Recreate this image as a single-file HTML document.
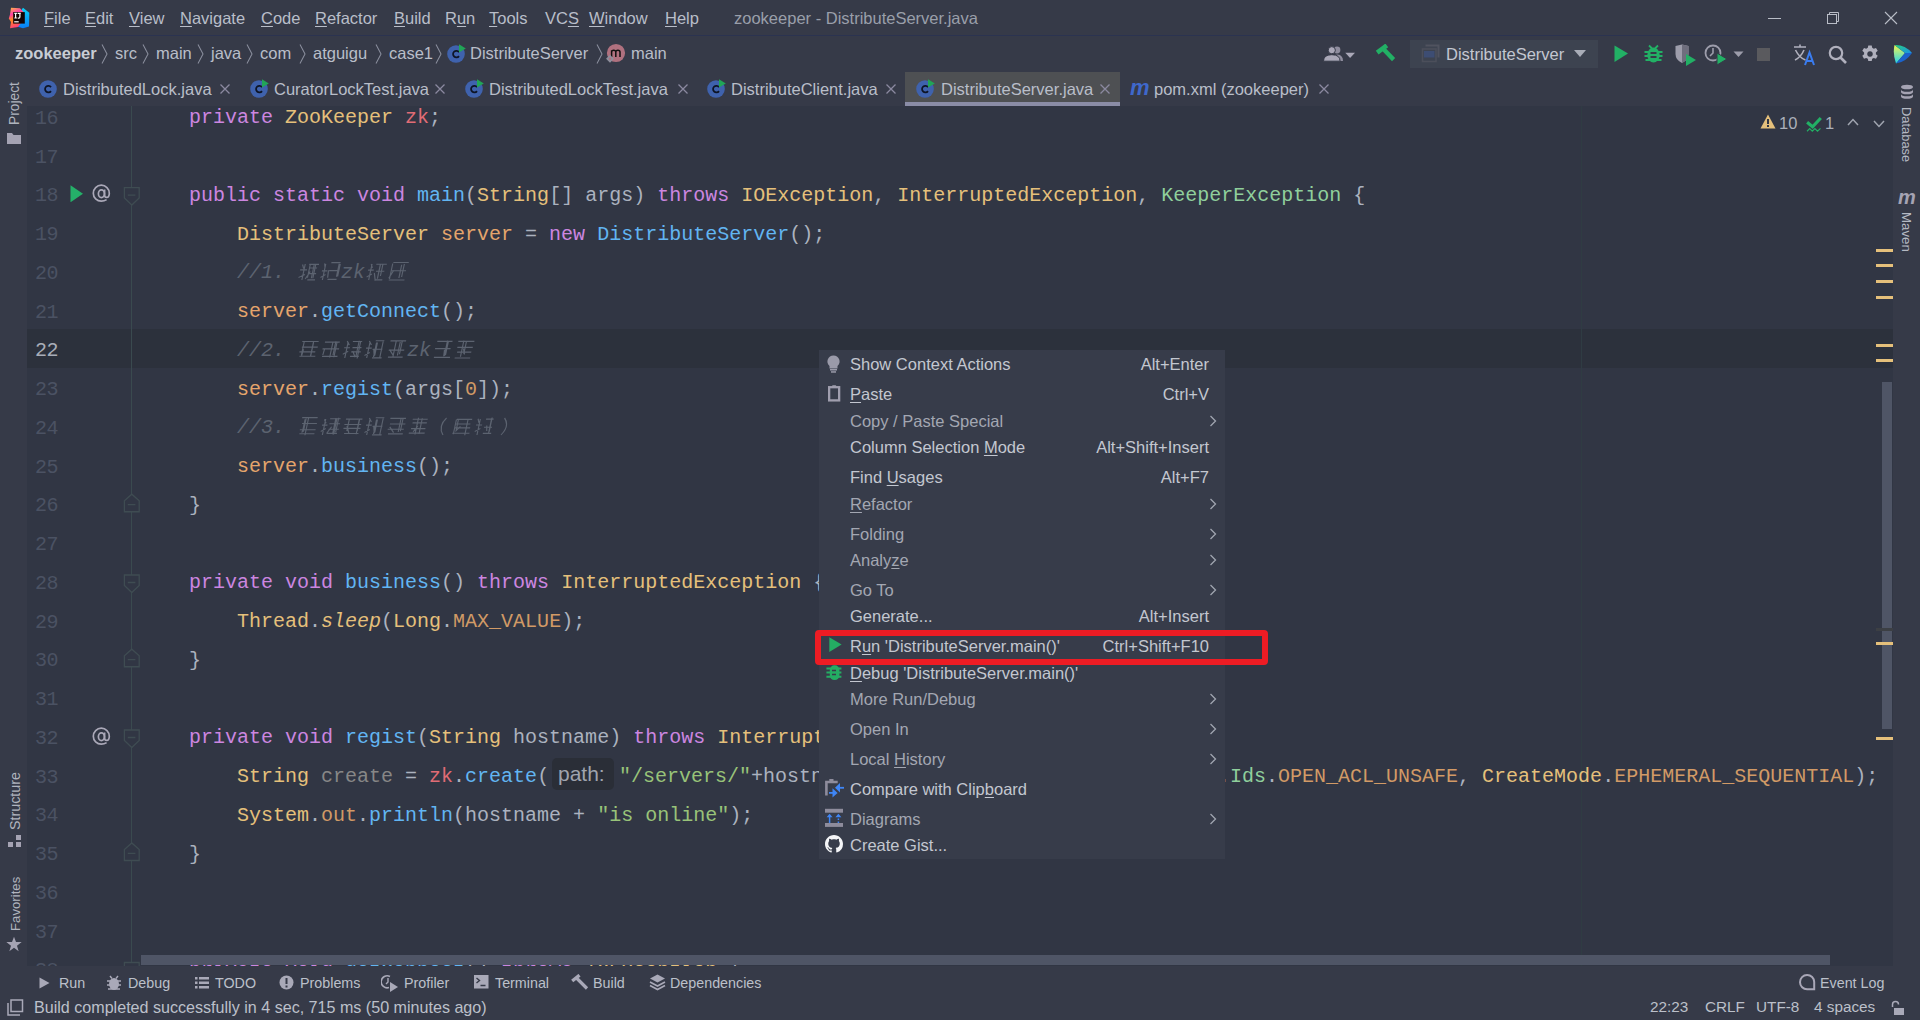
<!DOCTYPE html><html><head><meta charset="utf-8"><style>
*{margin:0;padding:0;box-sizing:border-box}
html,body{width:1920px;height:1020px;overflow:hidden;background:#363a48;font-family:"Liberation Sans",sans-serif;color:#b9bec9}
.a{position:absolute;white-space:pre}
.ui{font-size:16.5px;line-height:20px}
u{text-decoration:underline;text-decoration-thickness:1px;text-underline-offset:2px}
.x{color:#868a99}
#editor{left:27px;top:106px;width:1866px;height:860px;background:#313644;overflow:hidden}
.ln{position:absolute;left:0;width:31px;font-family:"Liberation Mono",monospace;font-size:20px;letter-spacing:-0.5px;color:#4b5263;text-align:right}
.code{position:absolute;font-family:"Liberation Mono",monospace;font-size:20px;line-height:38.75px;white-space:pre;color:#abb2bf}
.k{color:#cc86e0}.t{color:#e5c07b}.f{color:#62b5f2}.fd{color:#e06c75}.v{color:#e5a56c}.c{color:#5c6370;font-style:italic}
.s{color:#98c379}.n{color:#d19a66}.g{color:#878787}.kx{color:#8fcf9c}.st{color:#e5c07b;font-style:italic}
#menu{left:819px;top:350px;width:406px;height:509px;background:#373c4a}
.mi{position:absolute;left:31px;font-size:16.5px;line-height:20px;white-space:pre;color:#c3c7d0}
.mi.d{color:#a3a7b2}
.sc{position:absolute;right:16px;font-size:16.5px;line-height:20px;color:#c3c7d0;white-space:pre}
</style></head><body>
<svg class="a" style="left:8px;top:7px" width="22" height="22" viewBox="0 0 22 22">
<defs><linearGradient id="lgb" x1="0" y1="0" x2="0" y2="1"><stop offset="0" stop-color="#08d0f5"/><stop offset="1" stop-color="#0a7cf5"/></linearGradient>
<linearGradient id="lgp" x1="0" y1="0" x2="0.3" y2="1"><stop offset="0" stop-color="#ffc23a"/><stop offset="0.35" stop-color="#ff3fa8"/><stop offset="0.6" stop-color="#ff8a1c"/><stop offset="1" stop-color="#ff3e7a"/></linearGradient></defs>
<polygon points="15,0.8 21.3,5.8 21,19.5 15,21.3 9,19.5 12,5" fill="url(#lgb)"/>
<polygon points="3,0.8 12,1.2 15.5,5 13,16 10,20 2,21.3 3,15 0.8,11.5 2,7.5" fill="url(#lgp)"/>
<rect x="5.2" y="5.1" width="11.6" height="11.5" fill="#120404"/>
<path d="M6.3,6.3 h2.6 M7.6,6.3 v4.7 M6.3,11 h2.6 M9.6,6.3 h3.2 M11.9,6.3 v3.8 q0,1 -1,1 h-1.2" fill="none" stroke="#fff" stroke-width="1.2"/>
<rect x="6.2" y="14.2" width="4.5" height="1.2" fill="#fff"/>
</svg>
<div class="a ui" style="left:44px;top:8px"><u>F</u>ile</div>
<div class="a ui" style="left:85px;top:8px"><u>E</u>dit</div>
<div class="a ui" style="left:129px;top:8px"><u>V</u>iew</div>
<div class="a ui" style="left:180px;top:8px"><u>N</u>avigate</div>
<div class="a ui" style="left:261px;top:8px"><u>C</u>ode</div>
<div class="a ui" style="left:315px;top:8px"><u>R</u>efactor</div>
<div class="a ui" style="left:394px;top:8px"><u>B</u>uild</div>
<div class="a ui" style="left:445px;top:8px">R<u>u</u>n</div>
<div class="a ui" style="left:489px;top:8px"><u>T</u>ools</div>
<div class="a ui" style="left:545px;top:8px">VC<u>S</u></div>
<div class="a ui" style="left:589px;top:8px"><u>W</u>indow</div>
<div class="a ui" style="left:665px;top:8px"><u>H</u>elp</div>
<div class="a ui" style="left:734px;top:8px;color:#9a9faa">zookeeper - DistributeServer.java</div>
<div class="a" style="left:0;top:35px;width:1920px;height:1px;background:#2b3350"></div>
<div class="a ui" style="left:15px;top:43px;font-weight:bold;color:#c8ccd4">zookeeper</div>
<svg class="a" style="left:101px;top:44px" width="8" height="20"><path d="M1,0.5 L6,10.0 L1,19.5" fill="none" stroke="#8a8e9d" stroke-width="1.05"/></svg>
<div class="a ui" style="left:115px;top:43px">src</div>
<svg class="a" style="left:142px;top:44px" width="8" height="20"><path d="M1,0.5 L6,10.0 L1,19.5" fill="none" stroke="#8a8e9d" stroke-width="1.05"/></svg>
<div class="a ui" style="left:156px;top:43px">main</div>
<svg class="a" style="left:197px;top:44px" width="8" height="20"><path d="M1,0.5 L6,10.0 L1,19.5" fill="none" stroke="#8a8e9d" stroke-width="1.05"/></svg>
<div class="a ui" style="left:211px;top:43px">java</div>
<svg class="a" style="left:246px;top:44px" width="8" height="20"><path d="M1,0.5 L6,10.0 L1,19.5" fill="none" stroke="#8a8e9d" stroke-width="1.05"/></svg>
<div class="a ui" style="left:260px;top:43px">com</div>
<svg class="a" style="left:299px;top:44px" width="8" height="20"><path d="M1,0.5 L6,10.0 L1,19.5" fill="none" stroke="#8a8e9d" stroke-width="1.05"/></svg>
<div class="a ui" style="left:313px;top:43px">atguigu</div>
<svg class="a" style="left:375px;top:44px" width="8" height="20"><path d="M1,0.5 L6,10.0 L1,19.5" fill="none" stroke="#8a8e9d" stroke-width="1.05"/></svg>
<div class="a ui" style="left:389px;top:43px">case1</div>
<svg class="a" style="left:435px;top:44px" width="8" height="20"><path d="M1,0.5 L6,10.0 L1,19.5" fill="none" stroke="#8a8e9d" stroke-width="1.05"/></svg>
<svg class="a" style="left:447px;top:44px" width="22" height="20" viewBox="0 0 22 20"><circle cx="9" cy="10" r="8.8" fill="#3f62ad"/><path d="M12,8.1 A3.3,3.3 0 1 0 12,12.1" fill="none" stroke="#0e1526" stroke-width="1.8"/><polygon points="12,0.2 18.8,4.6 12,8.6" fill="#21a557"/></svg>
<div class="a ui" style="left:470px;top:43px">DistributeServer</div>
<svg class="a" style="left:596px;top:44px" width="8" height="20"><path d="M1,0.5 L6,10.0 L1,19.5" fill="none" stroke="#8a8e9d" stroke-width="1.05"/></svg>
<svg class="a" style="left:604px;top:43px" width="24" height="22" viewBox="0 0 24 22"><circle cx="12" cy="10" r="9.1" fill="#b0717f"/><path d="M7.6,14 V7.2 M7.6,9 q0,-1.8 2.1,-1.8 q2.1,0 2.1,1.8 V14 M11.8,9 q0,-1.8 2.1,-1.8 q2.1,0 2.1,1.8 V14" fill="none" stroke="#111" stroke-width="1.5"/><rect x="3.2" y="13" width="5.6" height="5.6" transform="rotate(45 6 15.8)" fill="#8f8f9c"/><rect x="4.9" y="14.7" width="2.2" height="2.2" transform="rotate(45 6 15.8)" fill="#b0717f"/></svg>
<div class="a ui" style="left:631px;top:43px">main</div>
<div class="a" style="left:905px;top:72px;width:215px;height:34px;background:#4e5053"></div>
<div class="a" style="left:905px;top:102px;width:215px;height:4px;background:#8a8ca6"></div>
<svg class="a" style="left:39px;top:79px" width="22" height="20" viewBox="0 0 22 20"><circle cx="9" cy="10" r="8.8" fill="#3f62ad"/><path d="M12,8.1 A3.3,3.3 0 1 0 12,12.1" fill="none" stroke="#0e1526" stroke-width="1.8"/></svg>
<div class="a ui" style="left:63px;top:79px">DistributedLock.java</div>
<svg class="a" style="left:219px;top:83px" width="12" height="12"><path d="M1.5,1.5 L10.5,10.5 M10.5,1.5 L1.5,10.5" stroke="#8b89a0" stroke-width="1.3"/></svg>
<svg class="a" style="left:250px;top:79px" width="22" height="20" viewBox="0 0 22 20"><circle cx="9" cy="10" r="8.8" fill="#3f62ad"/><path d="M12,8.1 A3.3,3.3 0 1 0 12,12.1" fill="none" stroke="#0e1526" stroke-width="1.8"/><polygon points="12,0.2 18.8,4.6 12,8.6" fill="#21a557"/></svg>
<div class="a ui" style="left:274px;top:79px">CuratorLockTest.java</div>
<svg class="a" style="left:434px;top:83px" width="12" height="12"><path d="M1.5,1.5 L10.5,10.5 M10.5,1.5 L1.5,10.5" stroke="#8b89a0" stroke-width="1.3"/></svg>
<svg class="a" style="left:465px;top:79px" width="22" height="20" viewBox="0 0 22 20"><circle cx="9" cy="10" r="8.8" fill="#3f62ad"/><path d="M12,8.1 A3.3,3.3 0 1 0 12,12.1" fill="none" stroke="#0e1526" stroke-width="1.8"/><polygon points="12,0.2 18.8,4.6 12,8.6" fill="#21a557"/></svg>
<div class="a ui" style="left:489px;top:79px">DistributedLockTest.java</div>
<svg class="a" style="left:677px;top:83px" width="12" height="12"><path d="M1.5,1.5 L10.5,10.5 M10.5,1.5 L1.5,10.5" stroke="#8b89a0" stroke-width="1.3"/></svg>
<svg class="a" style="left:707px;top:79px" width="22" height="20" viewBox="0 0 22 20"><circle cx="9" cy="10" r="8.8" fill="#3f62ad"/><path d="M12,8.1 A3.3,3.3 0 1 0 12,12.1" fill="none" stroke="#0e1526" stroke-width="1.8"/><polygon points="12,0.2 18.8,4.6 12,8.6" fill="#21a557"/></svg>
<div class="a ui" style="left:731px;top:79px">DistributeClient.java</div>
<svg class="a" style="left:885px;top:83px" width="12" height="12"><path d="M1.5,1.5 L10.5,10.5 M10.5,1.5 L1.5,10.5" stroke="#8b89a0" stroke-width="1.3"/></svg>
<svg class="a" style="left:916px;top:79px" width="22" height="20" viewBox="0 0 22 20"><circle cx="9" cy="10" r="8.8" fill="#3f62ad"/><path d="M12,8.1 A3.3,3.3 0 1 0 12,12.1" fill="none" stroke="#0e1526" stroke-width="1.8"/><polygon points="12,0.2 18.8,4.6 12,8.6" fill="#21a557"/></svg>
<div class="a ui" style="left:941px;top:79px">DistributeServer.java</div>
<svg class="a" style="left:1099px;top:83px" width="12" height="12"><path d="M1.5,1.5 L10.5,10.5 M10.5,1.5 L1.5,10.5" stroke="#8b89a0" stroke-width="1.3"/></svg>
<div class="a" style="left:1130px;top:77px;font:italic bold 22px/22px 'Liberation Sans';color:#3f68cc;letter-spacing:-1px">m</div>
<div class="a ui" style="left:1154px;top:79px">pom.xml (zookeeper)</div>
<svg class="a" style="left:1318px;top:83px" width="12" height="12"><path d="M1.5,1.5 L10.5,10.5 M10.5,1.5 L1.5,10.5" stroke="#8b89a0" stroke-width="1.3"/></svg>
<div class="a" id="editor"><div class="a" style="left:0;top:222.75px;width:1866px;height:38.75px;background:#2c313c"></div>
<div class="a" style="left:104px;top:0;width:1px;height:860px;background:#3a4a4f"></div>
<div class="a" style="left:1554px;top:0;width:1px;height:860px;background:#2f3c43"></div>
<div class="ln" style="top:-6.25px;line-height:38.75px;color:#4b5263">16</div>
<div class="ln" style="top:32.50px;line-height:38.75px;color:#4b5263">17</div>
<div class="ln" style="top:71.25px;line-height:38.75px;color:#4b5263">18</div>
<div class="ln" style="top:110.00px;line-height:38.75px;color:#4b5263">19</div>
<div class="ln" style="top:148.75px;line-height:38.75px;color:#4b5263">20</div>
<div class="ln" style="top:187.50px;line-height:38.75px;color:#4b5263">21</div>
<div class="ln" style="top:226.25px;line-height:38.75px;color:#a8adb8">22</div>
<div class="ln" style="top:265.00px;line-height:38.75px;color:#4b5263">23</div>
<div class="ln" style="top:303.75px;line-height:38.75px;color:#4b5263">24</div>
<div class="ln" style="top:342.50px;line-height:38.75px;color:#4b5263">25</div>
<div class="ln" style="top:381.25px;line-height:38.75px;color:#4b5263">26</div>
<div class="ln" style="top:420.00px;line-height:38.75px;color:#4b5263">27</div>
<div class="ln" style="top:458.75px;line-height:38.75px;color:#4b5263">28</div>
<div class="ln" style="top:497.50px;line-height:38.75px;color:#4b5263">29</div>
<div class="ln" style="top:536.25px;line-height:38.75px;color:#4b5263">30</div>
<div class="ln" style="top:575.00px;line-height:38.75px;color:#4b5263">31</div>
<div class="ln" style="top:613.75px;line-height:38.75px;color:#4b5263">32</div>
<div class="ln" style="top:652.50px;line-height:38.75px;color:#4b5263">33</div>
<div class="ln" style="top:691.25px;line-height:38.75px;color:#4b5263">34</div>
<div class="ln" style="top:730.00px;line-height:38.75px;color:#4b5263">35</div>
<div class="ln" style="top:768.75px;line-height:38.75px;color:#4b5263">36</div>
<div class="ln" style="top:807.50px;line-height:38.75px;color:#4b5263">37</div>
<div class="ln" style="top:846.25px;line-height:38.75px;color:#4b5263">38</div>
<div class="code" style="left:114px;top:-6.75px">    <span class="k">private</span> <span class="t">ZooKeeper</span> <span class="fd">zk</span>;</div>
<div class="code" style="left:114px;top:70.75px">    <span class="k">public static void</span> <span class="f">main</span>(<span class="t">String</span>[] args) <span class="k">throws</span> <span class="t">IOException</span>, <span class="t">InterruptedException</span>, <span class="kx">KeeperException</span> {</div>
<div class="code" style="left:114px;top:109.50px">        <span class="t">DistributeServer</span> <span class="v">server</span> = <span class="k">new</span> <span class="f">DistributeServer</span>();</div>
<div class="code" style="left:114px;top:148.25px">        <span class="c">//1. <svg style="display:inline-block;vertical-align:-3px" width="22" height="20"><path d="M3.3,3.4l1.9,4M2,8.9h6.9M5.9,3V19M2,16.5l5.9,-3M9.9,3.3H19.8M10.5,7.0H18.6M11.6,12.6H18.8M11.3,18.8H19.0M16.5,3.5V17.2M11.0,3.9V16.8M15.0,3.0V17.2M12.5,10.6l-3.5,7.5" transform="skewX(-12) translate(3,0)" fill="none" stroke="#5c6370" stroke-width="1.15"/></svg><svg style="display:inline-block;vertical-align:-3px" width="22" height="20"><path d="M3.2,2.4l1.2,4M2,9.9h5.4M4.4,3V19M2,16.5l4.4,-3M9.7,1.6H18.9M9.2,9.6H18.5M9.4,18.4H18.5M18.9,3.0V15.6M17.8,2.8V15.8M8.5,9.3l0.7,7.5" transform="skewX(-12) translate(3,0)" fill="none" stroke="#5c6370" stroke-width="1.15"/></svg>zk<svg style="display:inline-block;vertical-align:-3px" width="22" height="20"><path d="M3.9,3.0l1.9,4M2,9.1h5.7M4.7,3V19M2,16.0l4.7,-3M9.0,3.2H19.5M10.2,10.2H18.5M10.7,18.8H18.3M15.6,2.7V15.0M13.1,3.1V17.7M13.2,3.5V17.6M8.9,12.0l2.5,7.7" transform="skewX(-12) translate(3,0)" fill="none" stroke="#5c6370" stroke-width="1.15"/></svg><svg style="display:inline-block;vertical-align:-3px" width="22" height="20"><path d="M3.7,1.5H19.1M3.9,9.7H18.1M2.8,19.0H18.5M15.0,3.0V16.0M12.5,3.7V17.0M3.3,2.5V18.0M5.8,9.3l-3.4,7.9" transform="skewX(-12) translate(3,0)" fill="none" stroke="#5c6370" stroke-width="1.15"/></svg></span></div>
<div class="code" style="left:114px;top:187.00px">        <span class="v">server</span>.<span class="f">getConnect</span>();</div>
<div class="code" style="left:114px;top:225.75px">        <span class="c">//2. <svg style="display:inline-block;vertical-align:-3px" width="22" height="20"><path d="M2.8,2.5H19.2M3.6,8.1H19.5M2.1,12.8H18.0M3.1,17.2H19.0M14.1,2.2V16.9M4.8,2.2V15.9M14.3,3.4V16.8M5.7,10.1l-0.5,6.6" transform="skewX(-12) translate(3,0)" fill="none" stroke="#5c6370" stroke-width="1.15"/></svg><svg style="display:inline-block;vertical-align:-3px" width="22" height="20"><path d="M3.6,3.1H18.4M2.6,9.8H19.2M3.7,17.4H19.2M15.7,2.9V18.2M11.6,3.0V18.6M14.4,2.2V16.1M4.7,9.9l-0.5,6.1" transform="skewX(-12) translate(3,0)" fill="none" stroke="#5c6370" stroke-width="1.15"/></svg><svg style="display:inline-block;vertical-align:-3px" width="22" height="20"><path d="M3.7,2.1l2.9,4M2,8.7h5.8M4.8,3V19M2,15.2l4.8,-3M9.4,2.5H18.7M10.3,8.6H19.3M9.9,12.8H19.5M9.7,17.4H18.5M17.2,2.0V19.4M15.6,1.7V18.0M11.2,12.0l3.9,6.3" transform="skewX(-12) translate(3,0)" fill="none" stroke="#5c6370" stroke-width="1.15"/></svg><svg style="display:inline-block;vertical-align:-3px" width="22" height="20"><path d="M3.8,2.0l2.9,4M2,9.1h5.7M4.7,3V19M2,16.6l4.7,-3M10.1,1.7H18.7M8.7,10.2H18.6M10.0,18.8H19.6M12.2,3.4V16.4M17.7,2.4V18.5M11.3,3.4V17.9M10.0,10.3l1.9,7.1" transform="skewX(-12) translate(3,0)" fill="none" stroke="#5c6370" stroke-width="1.15"/></svg><svg style="display:inline-block;vertical-align:-3px" width="22" height="20"><path d="M2.9,1.8H18.5M3.1,11.1H18.6M3.8,18.1H18.5M14.7,2.4V15.3M12.9,3.0V16.5M8.7,1.6V18.7M3.9,10.7l4.6,5.4" transform="skewX(-12) translate(3,0)" fill="none" stroke="#5c6370" stroke-width="1.15"/></svg>zk<svg style="display:inline-block;vertical-align:-3px" width="22" height="20"><path d="M3.8,2.3H19.0M3.1,9.6H18.6M3.8,18.3H19.9M14.9,2.7V16.2M13.9,1.6V17.0M12.8,10.8l0.6,6.5" transform="skewX(-12) translate(3,0)" fill="none" stroke="#5c6370" stroke-width="1.15"/></svg><svg style="display:inline-block;vertical-align:-3px" width="22" height="20"><path d="M2.8,2.3H18.9M3.1,8.4H18.6M3.9,13.1H18.1M2.7,19.0H18.2M8.2,1.6V17.7M11.0,2.3V15.1M9.5,9.5l2.3,6.0" transform="skewX(-12) translate(3,0)" fill="none" stroke="#5c6370" stroke-width="1.15"/></svg></span></div>
<div class="code" style="left:114px;top:264.50px">        <span class="v">server</span>.<span class="f">regist</span>(args[<span class="n">0</span>]);</div>
<div class="code" style="left:114px;top:303.25px">        <span class="c">//3. <svg style="display:inline-block;vertical-align:-3px" width="22" height="20"><path d="M2.5,1.6H18.0M3.7,7.5H18.5M2.7,13.7H18.5M3.1,17.7H18.2M5.8,3.2V16.2M6.7,2.6V15.7M9.0,2.2V19.2M6.4,10.2l-1.1,6.5" transform="skewX(-12) translate(3,0)" fill="none" stroke="#5c6370" stroke-width="1.15"/></svg><svg style="display:inline-block;vertical-align:-3px" width="22" height="20"><path d="M3.2,3.4l2.4,4M2,9.1h5.4M4.4,3V19M2,15.4l4.4,-3M8.7,2.7H19.2M9.0,7.7H19.7M9.4,13.2H19.6M8.6,17.4H18.7M17.1,1.8V16.3M14.4,2.1V18.3M15.5,2.5V18.6M11.9,10.8l-3.7,6.7" transform="skewX(-12) translate(3,0)" fill="none" stroke="#5c6370" stroke-width="1.15"/></svg><svg style="display:inline-block;vertical-align:-3px" width="22" height="20"><path d="M2.6,3.1H19.1M2.2,8.5H19.0M2.1,12.3H19.1M3.8,17.5H18.2M16.3,3.7V15.2M6.0,2.9V15.1M16.0,4.0V18.2M5.1,9.9l3.4,7.4" transform="skewX(-12) translate(3,0)" fill="none" stroke="#5c6370" stroke-width="1.15"/></svg><svg style="display:inline-block;vertical-align:-3px" width="22" height="20"><path d="M3.8,2.0l2.9,4M2,9.1h5.7M4.7,3V19M2,16.6l4.7,-3M10.1,1.7H18.7M8.7,10.2H18.6M10.0,18.8H19.6M12.2,3.4V16.4M17.7,2.4V18.5M11.3,3.4V17.9M10.0,10.3l1.9,7.1" transform="skewX(-12) translate(3,0)" fill="none" stroke="#5c6370" stroke-width="1.15"/></svg><svg style="display:inline-block;vertical-align:-3px" width="22" height="20"><path d="M2.9,2.4H18.5M3.6,8.0H19.1M2.5,13.2H18.6M3.8,17.9H18.6M15.6,1.9V15.3M13.6,2.9V16.0M4.1,10.9l5.0,5.8" transform="skewX(-12) translate(3,0)" fill="none" stroke="#5c6370" stroke-width="1.15"/></svg><svg style="display:inline-block;vertical-align:-3px" width="22" height="20"><path d="M3.4,3.2H18.4M4.0,6.9H18.3M3.7,12.6H18.1M2.4,17.1H18.3M12.8,3.8V16.8M8.9,1.7V18.6M12.8,2.3V17.9M9.9,10.1l-3.4,5.8" transform="skewX(-12) translate(3,0)" fill="none" stroke="#5c6370" stroke-width="1.15"/></svg><svg style="display:inline-block;vertical-align:-3px" width="22" height="20"><path d="M15,2 Q8,10 15,19" transform="skewX(-12) translate(3,0)" fill="none" stroke="#5c6370" stroke-width="1.15"/></svg><svg style="display:inline-block;vertical-align:-3px" width="22" height="20"><path d="M3.5,3.3H18.9M3.8,8.0H18.1M2.8,11.9H18.7M2.0,17.2H19.1M5.2,3.1V15.2M3.2,3.6V18.3M14.8,2.8V19.2M8.6,10.3l-3.9,5.2" transform="skewX(-12) translate(3,0)" fill="none" stroke="#5c6370" stroke-width="1.15"/></svg><svg style="display:inline-block;vertical-align:-3px" width="22" height="20"><path d="M2.7,2.7l1.6,4M2,9.0h6.0M5.0,3V19M2,15.4l5.0,-3M10.7,3.1H18.3M10.4,11.2H18.4M10.5,17.4H18.9M16.5,1.5V15.8M16.2,2.3V17.0M12.8,9.5l1.1,5.5" transform="skewX(-12) translate(3,0)" fill="none" stroke="#5c6370" stroke-width="1.15"/></svg><svg style="display:inline-block;vertical-align:-3px" width="22" height="20"><path d="M7,2 Q14,10 7,19" transform="skewX(-12) translate(3,0)" fill="none" stroke="#5c6370" stroke-width="1.15"/></svg></span></div>
<div class="code" style="left:114px;top:342.00px">        <span class="v">server</span>.<span class="f">business</span>();</div>
<div class="code" style="left:114px;top:380.75px">    }</div>
<div class="code" style="left:114px;top:458.25px">    <span class="k">private void</span> <span class="f">business</span>() <span class="k">throws</span> <span class="t">InterruptedException</span> {</div>
<div class="code" style="left:114px;top:497.00px">        <span class="t">Thread</span>.<span class="st">sleep</span>(<span class="t">Long</span>.<span class="n">MAX_VALUE</span>);</div>
<div class="code" style="left:114px;top:535.75px">    }</div>
<div class="code" style="left:114px;top:613.25px">    <span class="k">private void</span> <span class="f">regist</span>(<span class="t">String</span> hostname) <span class="k">throws</span> <span class="t">InterruptedException</span>, <span class="kx">KeeperException</span> {</div>
<div class="code" style="left:114px;top:652.00px">        <span class="t">String</span> <span class="g">create</span> = <span class="fd">zk</span>.<span class="f">create</span>(</div>
<div class="code" style="left:114px;top:690.75px">        <span class="t">System</span>.<span class="n">out</span>.<span class="f">println</span>(hostname + <span class="s">"is online"</span>);</div>
<div class="code" style="left:114px;top:729.50px">    }</div>
<div class="code" style="left:114px;top:845.75px">    <span class="k">private void</span> <span class="f">getConnect</span>() <span class="k">throws</span> <span class="t">IOException</span> {</div>
<div class="a" style="left:525px;top:665.75px"></div>
<div class="a" style="left:525px;top:652px;width:62px;height:32px;border-radius:5px;background:#2a2e37"></div>
<div class="a" style="left:531px;top:657px;font-size:21px;line-height:22px;color:#9fa4ae">path:</div>
<div class="code" style="left:592px;top:652.00px"><span class="s">"/servers/"</span>+hostname.<span class="f">getBytes</span>(), <span class="kx">ZooDefs</span></div>
<div class="code" style="left:1191px;top:652.00px">.<span class="kx">Ids</span>.<span class="n">OPEN_ACL_UNSAFE</span>, <span class="t">CreateMode</span>.<span class="n">EPHEMERAL_SEQUENTIAL</span>);</div>
<svg class="a" style="left:0;top:0" width="140" height="860"><path d="M97.4,81.53 H112.2 V91.92 L104.8,99.03 L97.4,91.92 Z M100.8,89.03 H108.4" fill="#313644" stroke="#3f4c52" stroke-width="1.3"/><path d="M97.4,405.73 H112.2 V394.73 L104.8,388.23 L97.4,394.73 Z M100.8,398.62 H108.4" fill="#313644" stroke="#3f4c52" stroke-width="1.3"/><path d="M97.4,469.02 H112.2 V479.43 L104.8,486.52 L97.4,479.43 Z M100.8,476.52 H108.4" fill="#313644" stroke="#3f4c52" stroke-width="1.3"/><path d="M97.4,560.73 H112.2 V549.73 L104.8,543.23 L97.4,549.73 Z M100.8,553.62 H108.4" fill="#313644" stroke="#3f4c52" stroke-width="1.3"/><path d="M97.4,624.02 H112.2 V634.42 L104.8,641.52 L97.4,634.42 Z M100.8,631.52 H108.4" fill="#313644" stroke="#3f4c52" stroke-width="1.3"/><path d="M97.4,754.48 H112.2 V743.48 L104.8,736.98 L97.4,743.48 Z M100.8,747.38 H108.4" fill="#313644" stroke="#3f4c52" stroke-width="1.3"/><path d="M97.4,856.52 H112.2 V866.92 L104.8,874.02 L97.4,866.92 Z M100.8,864.02 H108.4" fill="#313644" stroke="#3f4c52" stroke-width="1.3"/></svg>
<svg class="a" style="left:43px;top:78.75px" width="14" height="17"><polygon points="0.5,0.3 13,8.7 0.5,17.3" fill="#25b069"/></svg>
<svg class="a" style="left:65px;top:78.25px" width="20" height="20"><path d="M14.6,15.6 Q12.2,17.2 9.3,17.2 A8,8 0 1 1 17.3,9.2 Q17.3,13.4 14.6,13.4 Q12.6,13.4 12.6,11 V5.5" fill="none" stroke="#aaa8b8" stroke-width="1.7"/><ellipse cx="9.4" cy="9.7" rx="3" ry="3.9" fill="none" stroke="#aaa8b8" stroke-width="1.7"/></svg>
<svg class="a" style="left:65px;top:620.75px" width="20" height="20"><path d="M14.6,15.6 Q12.2,17.2 9.3,17.2 A8,8 0 1 1 17.3,9.2 Q17.3,13.4 14.6,13.4 Q12.6,13.4 12.6,11 V5.5" fill="none" stroke="#aaa8b8" stroke-width="1.7"/><ellipse cx="9.4" cy="9.7" rx="3" ry="3.9" fill="none" stroke="#aaa8b8" stroke-width="1.7"/></svg>
<div class="a" style="left:114px;top:849px;width:1689px;height:10px;background:#4f5566"></div>
<div class="a" style="left:1855px;top:276px;width:10px;height:347px;background:#4f5566"></div>
<div class="a" style="left:1849px;top:142.5px;width:17px;height:3px;background:#e5c07b"></div>
<div class="a" style="left:1849px;top:157.5px;width:17px;height:3px;background:#e5c07b"></div>
<div class="a" style="left:1849px;top:173.5px;width:17px;height:3px;background:#e5c07b"></div>
<div class="a" style="left:1849px;top:189.5px;width:17px;height:3px;background:#e5c07b"></div>
<div class="a" style="left:1849px;top:237.5px;width:17px;height:3px;background:#e5c07b"></div>
<div class="a" style="left:1849px;top:252.5px;width:17px;height:3px;background:#e5c07b"></div>
<div class="a" style="left:1849px;top:521.5px;width:17px;height:3px;background:#3c3f44"></div>
<div class="a" style="left:1849px;top:535.5px;width:17px;height:3px;background:#e5c07b"></div>
<div class="a" style="left:1849px;top:630.5px;width:17px;height:3px;background:#e5c07b"></div></div>
<div class="a" id="menu"><div class="mi" style="top:4.30px">Show Context Actions</div>
<div class="sc" style="top:4.30px">Alt+Enter</div>
<svg class="a" style="left:7px;top:5.3px" width="16" height="18"><path d="M7.5,0.5 a6,6 0 0 1 4,10.5 v2.5 h-8 v-2.5 a6,6 0 0 1 4,-10.5z" fill="#9a9aa9"/><rect x="4" y="14" width="7" height="1.5" fill="#9a9aa9"/><rect x="5" y="16.2" width="5" height="1.5" fill="#9a9aa9"/></svg>
<div class="mi" style="top:34.15px"><u>P</u>aste</div>
<div class="sc" style="top:34.15px">Ctrl+V</div>
<svg class="a" style="left:9px;top:35px" width="14" height="18"><rect x="1.15" y="2.2" width="10" height="13.2" fill="none" stroke="#a09eae" stroke-width="2.3"/><rect x="4" y="0.3" width="4.3" height="2.6" rx="1" fill="#a09eae"/></svg>
<div class="mi d" style="top:60.70px">Copy / Paste Special</div>
<svg class="a" style="left:390px;top:64.7px" width="9" height="12"><path d="M1.5,1 L6.5,6 L1.5,11" fill="none" stroke="#a0a5b0" stroke-width="1.3"/></svg>
<div class="mi" style="top:87.25px">Column Selection <u>M</u>ode</div>
<div class="sc" style="top:87.25px">Alt+Shift+Insert</div>
<div class="mi" style="top:117.10px">Find <u>U</u>sages</div>
<div class="sc" style="top:117.10px">Alt+F7</div>
<div class="mi d" style="top:143.65px"><u>R</u>efactor</div>
<svg class="a" style="left:390px;top:147.7px" width="9" height="12"><path d="M1.5,1 L6.5,6 L1.5,11" fill="none" stroke="#a0a5b0" stroke-width="1.3"/></svg>
<div class="mi d" style="top:173.50px">Folding</div>
<svg class="a" style="left:390px;top:177.5px" width="9" height="12"><path d="M1.5,1 L6.5,6 L1.5,11" fill="none" stroke="#a0a5b0" stroke-width="1.3"/></svg>
<div class="mi d" style="top:200.05px">Analy<u>z</u>e</div>
<svg class="a" style="left:390px;top:204.0px" width="9" height="12"><path d="M1.5,1 L6.5,6 L1.5,11" fill="none" stroke="#a0a5b0" stroke-width="1.3"/></svg>
<div class="mi d" style="top:229.90px">Go To</div>
<svg class="a" style="left:390px;top:233.9px" width="9" height="12"><path d="M1.5,1 L6.5,6 L1.5,11" fill="none" stroke="#a0a5b0" stroke-width="1.3"/></svg>
<div class="mi" style="top:256.45px">Generate...</div>
<div class="sc" style="top:256.45px">Alt+Insert</div>
<div class="mi" style="top:286.30px">R<u>u</u>n 'DistributeServer.main()'</div>
<div class="sc" style="top:286.30px">Ctrl+Shift+F10</div>
<svg class="a" style="left:9.5px;top:287.3px" width="14" height="16"><polygon points="0.3,0.3 12.6,7.6 0.3,15" fill="#24ad63"/></svg>
<div class="mi" style="top:312.85px"><u>D</u>ebug 'DistributeServer.main()'</div>
<svg class="a" style="left:3px;top:310px" width="24" height="24"><rect x="7.8" y="5.3" width="9.6" height="14.8" rx="4.6" fill="#24ad63"/><path d="M4.4,8.6 H19.4 M4.4,12.6 H19.4 M4.4,16.8 H19.4" stroke="#24ad63" stroke-width="2"/><path d="M10,10.5 H14 M10,14.5 H14" stroke="#373c4a" stroke-width="1.4"/></svg>
<div class="mi d" style="top:339.40px">More Run/Debug</div>
<svg class="a" style="left:390px;top:343.4px" width="9" height="12"><path d="M1.5,1 L6.5,6 L1.5,11" fill="none" stroke="#a0a5b0" stroke-width="1.3"/></svg>
<div class="mi d" style="top:369.25px">Open In</div>
<svg class="a" style="left:390px;top:373.2px" width="9" height="12"><path d="M1.5,1 L6.5,6 L1.5,11" fill="none" stroke="#a0a5b0" stroke-width="1.3"/></svg>
<div class="mi d" style="top:399.10px">Local <u>H</u>istory</div>
<svg class="a" style="left:390px;top:403.1px" width="9" height="12"><path d="M1.5,1 L6.5,6 L1.5,11" fill="none" stroke="#a0a5b0" stroke-width="1.3"/></svg>
<div class="mi" style="top:428.95px">Compare with Clip<u>b</u>oard</div>
<svg class="a" style="left:3px;top:426px" width="26" height="26"><path d="M4.4,19.5 V6 H15.7" fill="none" stroke="#8e8c9c" stroke-width="2.6"/><rect x="7.3" y="3" width="4.2" height="2.5" fill="#8e8c9c"/><path d="M7,16.9 H11.5" stroke="#3f86f7" stroke-width="1.8"/><polygon points="10.5,12.2 15.6,16.9 10.5,21.5" fill="#3f86f7"/><path d="M17,11.8 H22" stroke="#3f86f7" stroke-width="1.8"/><polygon points="18,7 13,11.8 18,16.5" fill="#3f86f7"/></svg>
<div class="mi d" style="top:458.80px">Diagrams</div>
<svg class="a" style="left:390px;top:462.8px" width="9" height="12"><path d="M1.5,1 L6.5,6 L1.5,11" fill="none" stroke="#a0a5b0" stroke-width="1.3"/></svg>
<svg class="a" style="left:3px;top:456px" width="24" height="24"><rect x="3" y="2.8" width="18" height="3.9" fill="#8e8c9c"/><rect x="3" y="17" width="18" height="3.9" fill="#8e8c9c"/><path d="M7.6,17 V9" stroke="#3f86f7" stroke-width="1.5"/><polygon points="4.6,11.3 7.6,7.7 10.6,11.3" fill="#3f86f7"/><path d="M16.4,17 V9" stroke="#3f86f7" stroke-width="1.5" stroke-dasharray="1.6,1.4"/><polygon points="13.4,11.3 16.4,7.7 19.4,11.3" fill="#3f86f7"/></svg>
<div class="mi" style="top:485.35px">Create Gist...</div>
<svg class="a" style="left:6px;top:484.75px" width="18" height="18" viewBox="0 0 16 16"><path fill="#f4f5f7" d="M8 0C3.58 0 0 3.58 0 8c0 3.54 2.29 6.53 5.47 7.59.4.07.55-.17.55-.38 0-.19-.01-.82-.01-1.49-2.01.37-2.530-.49-2.69-.94-.09-.23-.48-.94-.82-1.13-.28-.15-.68-.52-.01-.53.63-.01 1.08.58 1.23.82.72 1.21 1.87.87 2.33.66.07-.52.28-.87.51-1.07-1.78-.2-3.64-.89-3.64-3.95 0-.87.31-1.59.82-2.15-.08-.2-.36-1.02.08-2.12 0 0 .67-.21 2.2.82.64-.18 1.32-.27 2-.27.68 0 1.36.09 2 .27 1.53-1.04 2.2-.82 2.2-.82.44 1.1.16 1.92.08 2.12.51.56.82 1.27.82 2.15 0 3.07-1.87 3.75-3.65 3.95.29.25.54.73.54 1.48 0 1.07-.01 1.93-.01 2.2 0 .21.15.46.55.38A8.013 8.013 0 0016 8c0-4.42-3.58-8-8-8z"/></svg></div>
<div class="a" style="left:815px;top:630px;width:453px;height:35px;border:6px solid #ed1c24;border-radius:4px"></div>
<div class="a" style="left:1768px;top:18px;width:12.5px;height:1px;background:#b9bdc7"></div>
<svg class="a" style="left:1826px;top:11px" width="14" height="14"><rect x="1.5" y="3.5" width="9" height="9" fill="none" stroke="#b9bdc7"/><path d="M3.5,3.5 v-2 h9 v9 h-2" fill="none" stroke="#b9bdc7"/></svg>
<svg class="a" style="left:1884px;top:11px" width="14" height="14"><path d="M1,1 L13,13 M13,1 L1,13" stroke="#b9bdc7" stroke-width="1.1"/></svg>
<svg class="a" style="left:1322px;top:44px" width="36" height="20"><circle cx="15" cy="6" r="3.4" fill="#8f8d9e"/><path d="M10,17 q0,-6 5.5,-6.5 q5.5,0.5 5.5,6.5z" fill="#8f8d9e"/><circle cx="9.8" cy="6.2" r="3.6" fill="#aaa8b8" stroke="#363a48" stroke-width="1"/><path d="M1.5,17.2 q0,-6.5 8.3,-6.5 q8.3,0 8.3,6.5z" fill="#aaa8b8" stroke="#363a48" stroke-width="1"/><polygon points="23.3,8.8 33,8.8 28.1,14" fill="#aaa8b8"/></svg>
<svg class="a" style="left:1375px;top:44px" width="22" height="20"><path d="M2.2,8.6 L11.8,1.4" stroke="#22b065" stroke-width="4.6"/><path d="M8.2,4.8 L18.6,15.6" stroke="#22b065" stroke-width="4.4"/></svg>
<div class="a" style="left:1410px;top:40px;width:188px;height:28px;background:#3d4350"></div>
<svg class="a" style="left:1421px;top:44px" width="20" height="20"><path d="M4.5,1.5 H17.5 V13.5" fill="none" stroke="#50535f" stroke-width="2"/><rect x="1.5" y="5" width="13.5" height="12.5" fill="#3d4350" stroke="#4c4f5b" stroke-width="1.6"/><rect x="3" y="7" width="10.5" height="6.5" fill="#3d4d73"/></svg>
<div class="a ui" style="left:1446px;top:44px;color:#c3c7d0">DistributeServer</div>
<svg class="a" style="left:1573px;top:49px" width="14" height="10"><polygon points="1,1 13,1 7,8" fill="#a9adb8"/></svg>
<svg class="a" style="left:1614px;top:45px" width="16" height="18"><polygon points="0.5,0.5 14,8.5 0.5,17" fill="#22b065"/></svg>
<svg class="a" style="left:1644px;top:44px" width="19" height="20"><ellipse cx="9.5" cy="11" rx="6.2" ry="7.5" fill="#22b065"/><path d="M0.5,8h18M0.5,12h18M1.5,16h16M5,1.5l3,3M14,1.5l-3,3" stroke="#22b065" stroke-width="1.8"/><rect x="6.5" y="8" width="6" height="2" fill="#363a48"/><rect x="6.5" y="12" width="6" height="2" fill="#363a48"/></svg>
<svg class="a" style="left:1674px;top:44px" width="24" height="22"><path d="M1.5,2 L8,0.5 L14.5,2 L14.5,10 Q14.5,16 8,19 Q1.5,16 1.5,10z" fill="#9d9dab"/><path d="M8,0.5 L14.5,2 L14.5,10 Q14.5,16 8,19z" fill="#6e6e7d"/><polygon points="12,10 22,16 12,22" fill="#22b065"/></svg>
<svg class="a" style="left:1704px;top:44px" width="26" height="22"><circle cx="9" cy="9" r="7.5" fill="none" stroke="#9d9dab" stroke-width="1.8"/><path d="M9,4 v5 l-3,3" fill="none" stroke="#9d9dab" stroke-width="1.6"/><polygon points="13,9 23,15 13,21" fill="#22b065" stroke="#363a48" stroke-width="1"/></svg>
<svg class="a" style="left:1733px;top:51px" width="12" height="8"><polygon points="0.5,0.5 10.5,0.5 5.5,6" fill="#9d9dab"/></svg>
<div class="a" style="left:1757px;top:48px;width:13px;height:13px;background:#5a5a5e"></div>
<svg class="a" style="left:1793px;top:44px" width="24" height="22"><path d="M1,3 h12 M7,0.5 v2.5 M2.5,6 q4,8 10,10 M11,6 q-3,7 -9,10" fill="none" stroke="#b0b0bd" stroke-width="1.6"/><path d="M12,21 L16.5,8.5 L21,21 M13.5,17 h6" fill="none" stroke="#3a7cf0" stroke-width="2"/></svg>
<svg class="a" style="left:1828px;top:45px" width="20" height="20"><circle cx="8" cy="8" r="6.2" fill="none" stroke="#b0b0bd" stroke-width="2.2"/><path d="M12.5,12.5 L18,18" stroke="#b0b0bd" stroke-width="2.6"/></svg>
<svg class="a" style="left:1861px;top:45px" width="18" height="18" viewBox="0 0 18 18"><path fill="#b0b0bd" fill-rule="evenodd" d="M7.3,0.5h3.4l0.5,2.3 1.6,0.9 2.2-0.8 1.7,2.9-1.8,1.6v1.8l1.8,1.6-1.7,2.9-2.2-0.8-1.6,0.9-0.5,2.3H7.3l-0.5-2.3-1.6-0.9-2.2,0.8-1.7-2.9 1.8-1.6V7.4L1.3,5.8 3,2.9l2.2,0.8 1.6-0.9z M9,6.2a2.8,2.8 0 1 0 0.01,0z"/></svg>
<svg class="a" style="left:1893px;top:44px" width="21" height="21"><defs><linearGradient id="gl1" x1="0" y1="0" x2="0" y2="1"><stop offset="0" stop-color="#f2f550"/><stop offset="1" stop-color="#22d3ee"/></linearGradient><linearGradient id="gl2" x1="0" y1="0" x2="1" y2="1"><stop offset="0" stop-color="#28d27e"/><stop offset="1" stop-color="#1a8fe8"/></linearGradient></defs><path d="M1.5,1 Q-0.5,10 3,19.5 L12,9 Z" fill="url(#gl1)"/><path d="M1.5,1 Q12,0.5 19,9 L12,9 Z" fill="url(#gl2)"/><path d="M3,19.5 Q13,18 19,9 L12,9 Z" fill="#1b63cc"/></svg>
<div class="a" style="left:7px;top:124.5px;transform:rotate(-90deg);transform-origin:0 0;font-size:13.8px;line-height:16px;color:#b0b4be">Project</div>
<svg class="a" style="left:7px;top:132px" width="14" height="12"><path d="M0,1 h5 l1.5,2 h7.5 v9 h-14z" fill="#a5a3b3"/></svg>
<div class="a" style="left:7px;top:830px;transform:rotate(-90deg);transform-origin:0 0;font-size:14.3px;line-height:16px;color:#b0b4be">Structure</div>
<svg class="a" style="left:8px;top:835px" width="14" height="13"><rect x="8" y="0" width="5" height="5" fill="#a5a3b3"/><rect x="0" y="7" width="5" height="5" fill="#a5a3b3"/><rect x="8" y="7" width="5" height="5" fill="#a5a3b3"/></svg>
<div class="a" style="left:7.5px;top:930.5px;transform:rotate(-90deg);transform-origin:0 0;font-size:13.2px;line-height:16px;color:#b0b4be">Favorites</div>
<svg class="a" style="left:6px;top:936px" width="16" height="16" viewBox="0 0 24 24"><path d="M12,1 L15,9 L23.5,9 L16.5,14.5 L19,23 L12,17.5 L5,23 L7.5,14.5 L0.5,9 L9,9z" fill="#a5a3b3"/></svg>
<div class="a" style="left:1893px;top:106px;width:27px;height:860px;background:#363a48"></div>
<svg class="a" style="left:1900px;top:84px" width="14" height="16"><ellipse cx="7" cy="3" rx="6" ry="2.3" fill="#a5a3b3"/><path d="M1,5.5 v2.5 a6,2.3 0 0 0 12,0 v-2.5 a6,2.3 0 0 1 -12,0z M1,10 v2.5 a6,2.3 0 0 0 12,0 v-2.5 a6,2.3 0 0 1 -12,0z" fill="#a5a3b3"/></svg>
<div class="a" style="left:1914px;top:107px;transform:rotate(90deg);transform-origin:0 0;font-size:12.9px;line-height:16px;color:#b5b9c3">Database</div>
<div class="a" style="left:1898px;top:187px;font:italic bold 20px/20px 'Liberation Sans';color:#a5a3b3;letter-spacing:-1px">m</div>
<div class="a" style="left:1914px;top:212px;transform:rotate(90deg);transform-origin:0 0;font-size:13.3px;line-height:16px;color:#b5b9c3">Maven</div>
<svg class="a" style="left:1760px;top:114px" width="16" height="15"><polygon points="8,0.5 15.5,14.5 0.5,14.5" fill="#e5c07b"/><rect x="7" y="5" width="2" height="5" fill="#313644"/><rect x="7" y="11" width="2" height="2" fill="#313644"/></svg>
<div class="a" style="left:1779px;top:113px;font-size:16.5px;line-height:20px;color:#abb0ba">10</div>
<svg class="a" style="left:1805px;top:114px" width="18" height="19"><path d="M2.1,8.3 L7.6,12.8 L15.8,4" fill="none" stroke="#22b065" stroke-width="3.1"/><path d="M2,17.2 L4.7,14.6 L7.3,17.2 L9.9,14.6 L12.5,17.2 L15.5,14.4" fill="none" stroke="#22b065" stroke-width="1.2"/></svg>
<div class="a" style="left:1825px;top:113px;font-size:16.5px;line-height:20px;color:#abb0ba">1</div>
<svg class="a" style="left:1847px;top:118px" width="12" height="8"><path d="M1,7 L6,1.5 L11,7" fill="none" stroke="#a0a5b0" stroke-width="1.5"/></svg>
<svg class="a" style="left:1873px;top:119.5px" width="12" height="8"><path d="M1,1 L6,6.5 L11,1" fill="none" stroke="#a0a5b0" stroke-width="1.5"/></svg>
<div class="a" style="left:59px;top:973px;font-size:14.3px;line-height:20px;color:#bcc0ca">Run</div>
<div class="a" style="left:128px;top:973px;font-size:14.3px;line-height:20px;color:#bcc0ca">Debug</div>
<div class="a" style="left:215px;top:973px;font-size:14.3px;line-height:20px;color:#bcc0ca">TODO</div>
<div class="a" style="left:300px;top:973px;font-size:14.3px;line-height:20px;color:#bcc0ca">Problems</div>
<div class="a" style="left:404px;top:973px;font-size:14.3px;line-height:20px;color:#bcc0ca">Profiler</div>
<div class="a" style="left:495px;top:973px;font-size:14.3px;line-height:20px;color:#bcc0ca">Terminal</div>
<div class="a" style="left:593px;top:973px;font-size:14.3px;line-height:20px;color:#bcc0ca">Build</div>
<div class="a" style="left:670px;top:973px;font-size:14.3px;line-height:20px;color:#bcc0ca">Dependencies</div>
<svg class="a" style="left:39px;top:977px" width="11" height="12"><polygon points="0.5,0.5 10.5,6 0.5,11.5" fill="#a9a9b8"/></svg>
<svg class="a" style="left:106px;top:975px" width="16" height="16"><ellipse cx="8" cy="9" rx="5" ry="6" fill="#a9a9b8"/><path d="M1,6h14M1,10h14M2,14h12M4,1l2,2.5M12,1l-2,2.5" stroke="#a9a9b8" stroke-width="1.4"/></svg>
<svg class="a" style="left:195px;top:976px" width="14" height="13"><rect x="0" y="1" width="2.5" height="2.5" fill="#a9a9b8"/><rect x="0" y="5.5" width="2.5" height="2.5" fill="#a9a9b8"/><rect x="0" y="10" width="2.5" height="2.5" fill="#a9a9b8"/><rect x="4" y="1" width="10" height="2.5" fill="#a9a9b8"/><rect x="4" y="5.5" width="10" height="2.5" fill="#a9a9b8"/><rect x="4" y="10" width="10" height="2.5" fill="#a9a9b8"/></svg>
<svg class="a" style="left:279px;top:975px" width="15" height="15"><circle cx="7.5" cy="7.5" r="7" fill="#a9a9b8"/><rect x="6.5" y="3" width="2" height="6" fill="#363a48"/><rect x="6.5" y="10.5" width="2" height="2" fill="#363a48"/></svg>
<svg class="a" style="left:381px;top:974px" width="19" height="18"><path d="M9,2.5 a6,6 0 1 0 -1,11" fill="none" stroke="#a9a9b8" stroke-width="1.6"/><path d="M7,4 v4 l-2,2" fill="none" stroke="#a9a9b8" stroke-width="1.4"/><polygon points="9,8 17,13 9,18" fill="#a9a9b8"/></svg>
<svg class="a" style="left:474px;top:975px" width="16" height="14"><rect x="0" y="0" width="14.5" height="13.5" fill="#a9a9b8"/><path d="M2.5,3 l3,2.5 -3,2.5 M6.5,10.5 h5" fill="none" stroke="#363a48" stroke-width="1.4"/></svg>
<svg class="a" style="left:571px;top:974px" width="18" height="16"><path d="M1.2,7 L8.5,1.2" stroke="#a9a9b8" stroke-width="3.4"/><path d="M5.5,4 L16,14.5" stroke="#a9a9b8" stroke-width="3.2"/></svg>
<svg class="a" style="left:649px;top:974px" width="17" height="17"><path d="M8.5,0.5 L16,4.5 L8.5,8.5 L1,4.5z" fill="#a9a9b8"/><path d="M1,8 L8.5,12 L16,8 M1,11.5 L8.5,15.5 L16,11.5" fill="none" stroke="#a9a9b8" stroke-width="1.6"/></svg>
<svg class="a" style="left:1798px;top:973px" width="18" height="18"><path d="M16.2,16.2 H9.2 A7.1,7.1 0 1 1 16.2,9.1 Z" fill="none" stroke="#a9a7b7" stroke-width="2"/></svg>
<div class="a" style="left:1820px;top:973px;font-size:14.3px;line-height:20px;color:#bcc0ca">Event Log</div>
<svg class="a" style="left:6px;top:999px" width="18" height="18"><rect x="5" y="1" width="11.5" height="11.5" fill="none" stroke="#a9a9b8" stroke-width="1.5"/><path d="M2,4 v12 h12" fill="none" stroke="#a9a9b8" stroke-width="1.5"/></svg>
<div class="a" style="left:34px;top:997px;font-size:16.1px;line-height:20px;color:#bcc0ca">Build completed successfully in 4 sec, 715 ms (50 minutes ago)</div>
<div class="a" style="left:1650px;top:997px;font-size:15.3px;line-height:20px;color:#bcc0ca">22:23</div>
<div class="a" style="left:1705px;top:997px;font-size:15.3px;line-height:20px;color:#bcc0ca">CRLF</div>
<div class="a" style="left:1756px;top:997px;font-size:15.3px;line-height:20px;color:#bcc0ca">UTF-8</div>
<div class="a" style="left:1814px;top:997px;font-size:15.3px;line-height:20px;color:#bcc0ca">4 spaces</div>
<svg class="a" style="left:1889px;top:1000px" width="16" height="16"><path d="M3.5,7 V4.5 a3,3 0 0 1 6,0" fill="none" stroke="#a9a9b8" stroke-width="1.5"/><rect x="5" y="8" width="10" height="7" fill="#a9a9b8"/></svg>
</body></html>
